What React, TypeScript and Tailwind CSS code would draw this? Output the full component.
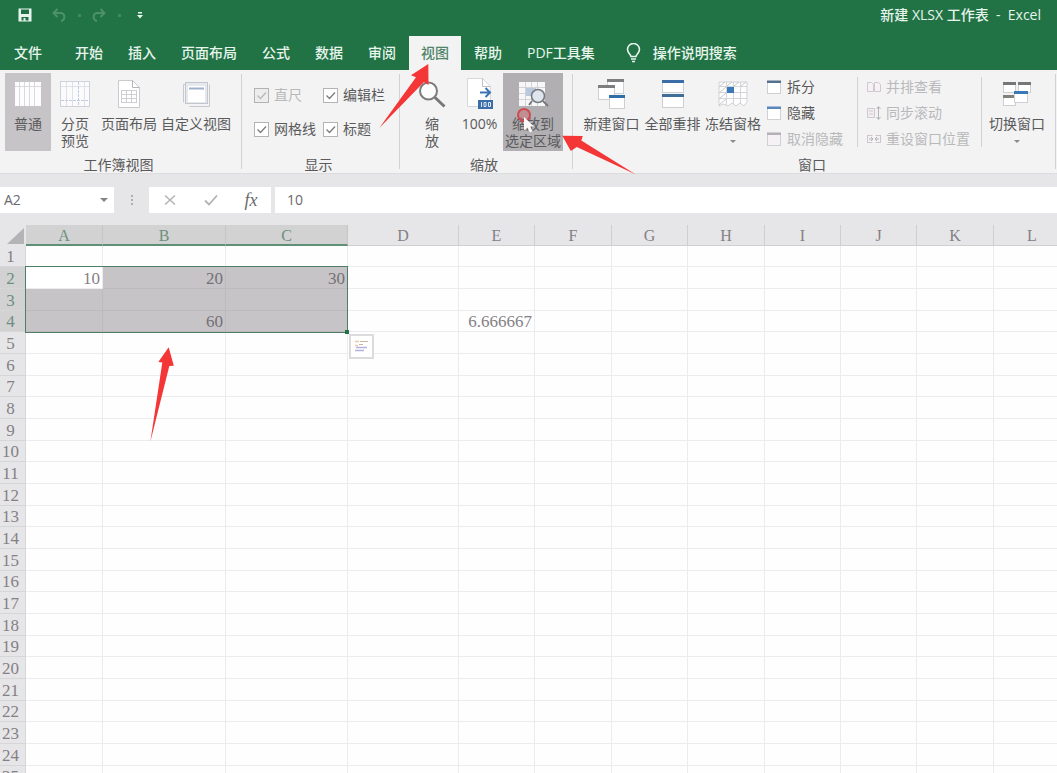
import { ReactNode, useState } from 'react';
import clsx from 'clsx';

const tabs = ['开始', '插入', '页面布局', '公式', '数据', '审阅', '视图', '帮助', 'PDF工具集'];

const columns = [
  { name: 'A', width: 'w-[77px]' },
  { name: 'B', width: 'w-[123px]' },
  { name: 'C', width: 'w-[122px]' },
  { name: 'D', width: 'w-[111px]' },
  { name: 'E', width: 'w-[76px]' },
  { name: 'F', width: 'w-[77px]' },
  { name: 'G', width: 'w-[76px]' },
  { name: 'H', width: 'w-[77px]' },
  { name: 'I', width: 'w-[76px]' },
  { name: 'J', width: 'w-[76px]' },
  { name: 'K', width: 'w-[77px]' },
  { name: 'L', width: 'w-[77px]' },
];

const rows = Array.from({ length: 25 }, (_, i) => i + 1);

const values: Record<string, string> = {
  A2: '10',
  B2: '20',
  C2: '30',
  B4: '60',
  E4: '6.666667',
};

const isSelectedCol = (c: string) => ['A', 'B', 'C'].includes(c);
const isSelectedRow = (r: number) => r >= 2 && r <= 4;

/* ---------- icons ---------- */

function SaveIcon() {
  return (
    <svg width="14" height="14" viewBox="0 0 14 14">
      <path fill="#e8f5ec" fillRule="evenodd" d="M0.5 0.5h13v13h-13zM3 1.5v4.5h8V1.5zM3.5 9v3.5h2V10h2v2.5h3V9z" />
    </svg>
  );
}

function UndoIcon() {
  return (
    <svg width="14" height="14" viewBox="0 0 14 14" fill="none" stroke="#4d9069" strokeWidth="2">
      <path d="M5.500 1L1.500 5l4 4M1.500 5h7c5 0 5 7 0.500 8" />
    </svg>
  );
}

function RedoIcon() {
  return (
    <svg width="14" height="14" viewBox="0 0 14 14" fill="none" stroke="#4d9069" strokeWidth="2">
      <path d="M8.500 1l4 4-4 4M12.500 5h-7c-5 0-5 7-0.500 8" />
    </svg>
  );
}

function BulbIcon() {
  return (
    <svg width="15" height="20" viewBox="0 0 15 20" fill="none" stroke="#e8f5ec" strokeWidth="1.600">
      <path d="M5 13.500c0-2-3.500-3.500-3.500-7a6 6 0 0 1 12 0c0 3.500-3.500 5-3.500 7zM5 16h5M6 18.500h3" />
    </svg>
  );
}

function NormalViewIcon() {
  return (
    <svg width="28" height="28" viewBox="0 0 28 28">
      <rect x="1" y="2" width="26" height="24" fill="#fdfdfd" />
      <path d="M5.500 2v24M10.500 2v24M15.500 2v24M20.500 2v24M1 6.500h26" stroke="#d9d9dd" fill="none" />
    </svg>
  );
}

function PageBreakIcon() {
  return (
    <svg width="30" height="28" viewBox="0 0 30 28">
      <rect x="0.500" y="1.500" width="29" height="25" fill="#fbfbfd" stroke="#cfd2da" />
      <path d="M6.500 2v24M12.500 2v24M24.500 2v24M1 6.500h28" stroke="#dfe1e6" fill="none" />
      <path d="M18.500 2v24M1 20.500h28" stroke="#c3cbe0" fill="none" strokeDasharray="3 1" />
    </svg>
  );
}

function PageLayoutIcon() {
  return (
    <svg width="24" height="30" viewBox="0 0 24 30">
      <path d="M1.500 1.500h14l7 7v20h-21z" fill="#fff" stroke="#cacace" />
      <path d="M15.500 1.500v7h7" fill="none" stroke="#b5b5ba" />
      <path d="M4 11.500h16M4 15.500h16M4 19.500h16M4 23.500h16M4.500 11v13M9.500 11v13M14.500 11v13M19.500 11v13" stroke="#cdcdd2" fill="none" />
    </svg>
  );
}

function CustomViewIcon() {
  return (
    <svg width="28" height="28" viewBox="0 0 28 28">
      <path d="M1.500 22.500v-18h20M7.500 26.500h20v-22" fill="none" stroke="#c7c9d1" />
      <rect x="3.500" y="2.500" width="22" height="21" fill="#e6e8ee" stroke="#c4c6cd" />
      <rect x="6" y="6" width="17" height="16" fill="#fff" />
      <path d="M7 8.500h15" stroke="#9fb1cf" strokeWidth="2" />
    </svg>
  );
}

function ZoomIcon() {
  return (
    <svg width="30" height="30" viewBox="0 0 30 30">
      <circle cx="11.500" cy="12" r="8.500" fill="#fcfcfc" stroke="#7c7c7f" strokeWidth="2" />
      <path d="M18 18.500l9.500 9" stroke="#77777a" strokeWidth="3" />
    </svg>
  );
}

function Zoom100Icon() {
  return (
    <svg width="28" height="34" viewBox="0 0 28 34">
      <path d="M1.500 1.500h15l8 8v20h-23z" fill="#fff" stroke="#d8d8dc" />
      <path d="M16.500 1.500v8h8" fill="none" stroke="#c0c0c4" />
      <path d="M14 15.500h9M19.500 11l4.500 4.500-4.500 4.500" fill="none" stroke="#3b74b5" strokeWidth="2" />
      <rect x="12" y="23" width="15" height="9" fill="#3b6ea8" />
      <path d="M15.500 25v5M18 25.500h2v4h-2zM22.500 25.500h2v4h-2z" fill="none" stroke="#dfe9f5" />
    </svg>
  );
}

function ZoomSelectionIcon() {
  return (
    <svg width="32" height="30" viewBox="0 0 32 30">
      <rect x="2" y="3" width="26" height="24" fill="#f7f7f8" />
      <path d="M8.500 3v24M14.500 3v24M20.500 3v24M2 8.500h26M2 14.500h26M2 20.500h26" stroke="#d3d3d7" fill="none" />
      <rect x="9" y="9" width="10" height="8" fill="#b8c9de" />
      <circle cx="21" cy="17" r="6.500" fill="#dfe5ed" stroke="#77797f" strokeWidth="1.600" />
      <path d="M26 22l5 5M15 22l-3 4" stroke="#77797f" strokeWidth="2" />
    </svg>
  );
}

function MiniWindow({ x, y, w, h, bar }: { x: number; y: number; w: number; h: number; bar: string }) {
  return (
    <g>
      <rect x={x + 0.5} y={y + 0.5} width={w - 1} height={h - 1} fill="#fff" stroke="#cfcfd3" />
      <rect x={x} y={y} width={w} height="3" fill={bar} />
    </g>
  );
}

function NewWindowIcon() {
  return (
    <svg width="30" height="32" viewBox="0 0 30 32">
      <MiniWindow x={10} y={1} w={17} h={15} bar="#7d7d80" />
      <MiniWindow x={1} y={7} w={17} h={15} bar="#7d7d80" />
      <MiniWindow x={12} y={17} w={16} h={14} bar="#2f6ea6" />
    </svg>
  );
}

function ArrangeIcon() {
  return (
    <svg width="24" height="30" viewBox="0 0 24 30">
      <MiniWindow x={1} y={1} w={22} h={13} bar="#3b6ea8" />
      <MiniWindow x={1} y={15} w={22} h={14} bar="#3f6f98" />
    </svg>
  );
}

function FreezeIcon() {
  return (
    <svg width="30" height="28" viewBox="0 0 30 28">
      <path d="M1 2h28v20l-3 4-4-3-4 3-4-3-4 3-5-2-4 2z" fill="#fdfdfd" stroke="#d2d2d6" />
      <path d="M8.500 2v23M15.500 2v23M22.500 2v21M1 6.500h28M1 12.500h28M1 18.500h28" stroke="#d4d4d9" fill="none" />
      <path d="M1 7l6-5M1 13l7-6M1 19l7-6M1 25l7-6M9 6l5-4M16 6l5-4M23 6l5-4" stroke="#c8c8ce" fill="none" />
      <rect x="9" y="7" width="7" height="6" fill="#3b78b8" />
    </svg>
  );
}

function SwitchIcon() {
  return (
    <svg width="30" height="28" viewBox="0 0 30 28">
      <MiniWindow x={1} y={2} w={13} h={11} bar="#77777a" />
      <MiniWindow x={16} y={2} w={13} h={11} bar="#77777a" />
      <MiniWindow x={1} y={15} w={13} h={11} bar="#85807a" />
      <MiniWindow x={12} y={11} w={14} h={12} bar="#3b78b8" />
    </svg>
  );
}

function PaneIcon({ bar, muted }: { bar: string; muted?: boolean }) {
  return (
    <svg width="14" height="14" viewBox="0 0 14 14">
      <rect x="0.500" y="1.500" width="13" height="12" fill={muted ? '#f6f1f4' : '#fff'} stroke="#cfcfd4" />
      <rect x="0" y="0.500" width="14" height="2.500" fill={bar} />
    </svg>
  );
}

function SideBySideIcon() {
  return (
    <svg width="16" height="14" viewBox="0 0 16 14" fill="#f6f1f5" stroke="#d2c8d0">
      <path d="M1.500 2.500h4l2 2v7h-6zM8.500 2.500h4l2 2v7h-6z" />
    </svg>
  );
}

function SyncScrollIcon() {
  return (
    <svg width="16" height="16" viewBox="0 0 16 16" fill="#f3eef2" stroke="#cfc8cf">
      <path d="M1.500 3.500h7v9h-7zM3 6h4M3 9h4" />
      <path d="M12.500 2v12M10.500 4l2-2.500 2 2.500M10.500 12l2 2.500 2-2.500" stroke="#b3b3b8" fill="none" />
    </svg>
  );
}

function ResetPositionIcon() {
  return (
    <svg width="16" height="14" viewBox="0 0 16 14" fill="none" stroke="#cfc3cc">
      <path d="M1.500 3.500h5M9.500 3.500h5M1.500 10.500h5M9.500 10.500h5M1.500 3v8M14.500 3v8" />
      <path d="M3 7h4M5 5l2 2-2 2M13 7H9M11 5L9 7l2 2" stroke="#b5aeb5" />
    </svg>
  );
}

/* ---------- ribbon ---------- */

function BigButton({ icon, lines, className, arrow }: { icon: ReactNode; lines: string[]; className: string; arrow?: boolean }) {
  return (
    <button className={clsx('flex h-[78px] shrink-0 flex-col items-center pt-1 leading-[17px] whitespace-nowrap', className)}>
      <span className="flex h-[38px] items-center justify-center pb-1">{icon}</span>
      {lines.map(l => <span key={l}>{l}</span>)}
      {arrow && <span className="mt-2 border-x-3 border-t-3 border-x-transparent border-t-[#8a8a8c]" />}
    </button>
  );
}

function SmallButton({ icon, label, disabled }: { icon: ReactNode; label: string; disabled?: boolean }) {
  return (
    <button disabled={disabled} className="flex h-[26px] items-center gap-1 whitespace-nowrap disabled:text-[#b9b9bc]">
      <span className="flex w-4 shrink-0">{icon}</span>
      {label}
    </button>
  );
}

function Check({ label, disabled }: { label: string; disabled?: boolean }) {
  return (
    <label className={clsx('flex items-center gap-[5px] whitespace-nowrap', disabled && 'text-[#b9b9bc]')}>
      <span className="grid size-[15px] shrink-0">
        <input
          type="checkbox"
          defaultChecked
          disabled={disabled}
          className="peer col-start-1 row-start-1 size-[15px] appearance-none border border-[#b3b3b6] bg-white disabled:bg-[#ededee]"
        />
        <svg viewBox="0 0 15 15" className="pointer-events-none invisible col-start-1 row-start-1 size-[15px] peer-checked:visible" fill="none" stroke={disabled ? '#b9b9bc' : '#7c7c80'} strokeWidth="1.300">
          <path d="M3.500 7.500l3 3 5.500-6" />
        </svg>
      </span>
      {label}
    </label>
  );
}

function Group({ label, width, pad, children }: { label: string; width: string; pad: string; children: ReactNode }) {
  return (
    <section aria-label={label} className={clsx('shrink-0 pt-[3px]', width)}>
      <div className={clsx('flex h-[78px]', pad)}>{children}</div>
      <div className="mt-1.5 pr-1 text-center leading-4">{label}</div>
    </section>
  );
}

function Separator() {
  return <div className="my-1 w-px shrink-0 bg-[#d2d2d4]" />;
}

function Ribbon() {
  return (
    <div className="flex h-[104px] shrink-0 overflow-hidden border-b border-[#dcdcde] bg-[#f3f3f3] text-sm text-[#5a5a5c]">
      <Group label="工作簿视图" width="w-[241px]" pad="pl-[5px]">
        <BigButton icon={<NormalViewIcon />} lines={['普通']} className="w-[46px] bg-[#c6c4c6]" />
        <BigButton icon={<PageBreakIcon />} lines={['分页', '预览']} className="w-12" />
        <BigButton icon={<PageLayoutIcon />} lines={['页面布局']} className="w-[60px]" />
        <BigButton icon={<CustomViewIcon />} lines={['自定义视图']} className="w-[74px]" />
      </Group>
      <Separator />
      <Group label="显示" width="w-[157px]" pad="pl-3">
        <div className="grid grid-cols-[69px_auto] grid-rows-[34px_34px] content-center">
          <Check label="直尺" disabled />
          <Check label="编辑栏" />
          <Check label="网格线" />
          <Check label="标题" />
        </div>
      </Group>
      <Separator />
      <Group label="缩放" width="w-[172px]" pad="pl-2">
        <BigButton icon={<ZoomIcon />} lines={['缩', '放']} className="w-12" />
        <BigButton icon={<Zoom100Icon />} lines={['100%']} className="w-[47px]" />
        <BigButton icon={<ZoomSelectionIcon />} lines={['缩放到', '选定区域']} className="w-[60px] bg-[#b1afb1]" />
      </Group>
      <Separator />
      <Group label="窗口" width="w-[482px]" pad="pl-2">
        <BigButton icon={<NewWindowIcon />} lines={['新建窗口']} className="w-[61px]" />
        <BigButton icon={<ArrangeIcon />} lines={['全部重排']} className="w-[61px]" />
        <BigButton icon={<FreezeIcon />} lines={['冻结窗格']} className="w-[60px]" arrow />
        <div className="ml-1 w-[90px] shrink-0 pt-px">
          <SmallButton icon={<PaneIcon bar="#54708f" />} label="拆分" />
          <SmallButton icon={<PaneIcon bar="#5b86bd" />} label="隐藏" />
          <SmallButton icon={<PaneIcon bar="#b5b0b6" muted />} label="取消隐藏" disabled />
        </div>
        <Separator />
        <div className="ml-2 w-[115px] shrink-0 pt-px">
          <SmallButton icon={<SideBySideIcon />} label="并排查看" disabled />
          <SmallButton icon={<SyncScrollIcon />} label="同步滚动" disabled />
          <SmallButton icon={<ResetPositionIcon />} label="重设窗口位置" disabled />
        </div>
        <Separator />
        <BigButton icon={<SwitchIcon />} lines={['切换窗口']} className="ml-1 w-[62px]" arrow />
      </Group>
      <Separator />
    </div>
  );
}

/* ---------- sheet ---------- */

function rowHeight(r: number) {
  return r % 3 === 1 ? 'h-[21px]' : 'h-[22px]';
}

function Sheet() {
  return (
    <div className="relative min-h-0 flex-1 overflow-hidden bg-[#fefefe] font-['Liberation_Serif','Noto_Sans_CJK_SC',serif] text-[17px] leading-[18px] text-[#858085]">
      <table className="w-[1071px] table-fixed border-separate border-spacing-0">
        <thead>
          <tr className="bg-[#e6e6e8]">
            <th className="h-[21px] w-[26px] p-0" aria-label="全选">
              <svg width="26" height="21" viewBox="0 0 26 21" className="block">
                <path d="M24 3v16H7z" fill="#b4b4b6" />
              </svg>
            </th>
            {columns.map(c => (
              <th
                key={c.name}
                scope="col"
                className={clsx(
                  'h-[21px] border-r p-0 pt-0.5 text-base leading-4 font-normal',
                  c.width,
                  isSelectedCol(c.name)
                    ? 'border-r-[#c4c6c5] border-b-2 border-b-[#5f8f76] bg-[#d2d2d3] text-[#6c8f7e]'
                    : 'border-b border-r-[#cfcfd2] border-b-[#cfcfd2]'
                )}
              >
                {c.name}
              </th>
            ))}
          </tr>
        </thead>
        <tbody>
          {rows.map(r => (
            <tr key={r}>
              <th
                scope="row"
                className={clsx(
                  'border-r border-b border-[#d6d6d8] p-0 pt-0.5 pr-1 font-normal',
                  rowHeight(r),
                  isSelectedRow(r) ? 'bg-[#d2d2d3] text-[#6c8f7e]' : 'bg-[#e6e6e8]'
                )}
              >
                {r}
              </th>
              {columns.map(c => {
                const id = `${c.name}${r}`;
                const selected = isSelectedCol(c.name) && isSelectedRow(r);
                return (
                  <td
                    key={id}
                    className={clsx(
                      'border-r border-b p-0 pt-0.5 pr-0.5 text-right',
                      selected && id !== 'A2' ? 'border-[#bcbabd] bg-[#c6c4c6] text-[#757075]' : 'border-[#ececee]',
                      id === 'A2' && 'bg-white'
                    )}
                  >
                    {values[id]}
                  </td>
                );
              })}
            </tr>
          ))}
        </tbody>
      </table>

      {/* selection frame with its fill handle */}
      <div className="pointer-events-none absolute top-[41px] left-[25px] h-[67px] w-[323px] border border-[#4f7d66]">
        <span className="absolute -right-0.5 -bottom-0.5 size-1 bg-[#217346]" />
      </div>

      <button aria-label="快速分析" className="absolute top-[109px] left-[349px] flex size-[25px] items-center justify-center border-2 border-[#dcdcde] bg-white">
        <svg width="15" height="13" viewBox="0 0 15 13" fill="none">
          <path d="M1 1.500h4M1 5.500h3" stroke="#efc9a0" strokeWidth="1.500" />
          <path d="M6 1.500h8M5 4.500h4" stroke="#c9b4a6" />
          <path d="M2 7.500h11M1 10.500h9" stroke="#b3b2dd" strokeWidth="1.500" />
        </svg>
      </button>
    </div>
  );
}

export default function App() {
  const [active, setActive] = useState('视图');

  return (
    <div className="relative flex h-screen flex-col overflow-hidden bg-[#e6e6e8] font-['Open_Sans','Noto_Sans_CJK_SC',sans-serif]">
      {/* Title bar */}
      <header className="flex h-9 shrink-0 items-center bg-[#217346] pr-4 pb-1.5 pl-[18px] text-sm font-medium text-[#e8f5ec]">
        <button aria-label="保存"><SaveIcon /></button>
        <button aria-label="撤消" className="ml-5"><UndoIcon /></button>
        <span className="ml-3 size-[3px] bg-[#3f875e]" />
        <button aria-label="恢复" className="ml-[11px]"><RedoIcon /></button>
        <span className="ml-3 size-[3px] bg-[#3f875e]" />
        <button aria-label="自定义快速访问工具栏" className="ml-4 flex flex-col items-center">
          <svg width="6" height="7" viewBox="0 0 6 7" fill="#e8f5ec"><path d="M1 0h4v1.500H1zM0 3h6L3 6.500z" /></svg>
        </button>
        <h1 className="ml-auto whitespace-pre">新建 XLSX 工作表  -  Excel</h1>
      </header>

      {/* Tabs */}
      <nav className="flex h-[34px] shrink-0 items-stretch gap-px bg-[#217346] pl-0.5 text-sm font-medium whitespace-nowrap text-[#e8f5ec]">
        <button className="mr-2 px-3">文件</button>
        {tabs.map(t => (
          <button
            key={t}
            onClick={() => setActive(t)}
            className={clsx('px-3', active === t && 'bg-[#f3f3f3] text-[#4f8468]')}
          >
            {t}
          </button>
        ))}
        <button className="ml-4 flex items-center gap-3 px-0.5"><BulbIcon />操作说明搜索</button>
      </nav>

      <Ribbon />

      {/* Formula bar */}
      <div className="flex h-[51px] shrink-0 items-stretch pt-[13px] pb-3 text-sm text-[#6a6a6d]">
        <div className="flex w-[114px] shrink-0 items-center bg-white pr-1.5 pl-1">
          <input aria-label="名称框" defaultValue="A2" className="w-full min-w-0 outline-none" />
          <span className="shrink-0 border-x-4 border-t-4 border-x-transparent border-t-[#858588]" />
        </div>
        <div className="flex w-[35px] shrink-0 flex-col items-center justify-center gap-0.5">
          <span className="size-0.5 bg-[#adadb0]" />
          <span className="size-0.5 bg-[#adadb0]" />
          <span className="size-0.5 bg-[#adadb0]" />
        </div>
        <div className="mr-1 flex w-[122px] shrink-0 items-center justify-around bg-white">
          <button aria-label="取消">
            <svg width="14" height="14" viewBox="0 0 14 14" stroke="#b3b3b6" strokeWidth="1.500"><path d="M2 2.500l10 9M12 2.500l-10 9" /></svg>
          </button>
          <button aria-label="输入">
            <svg width="14" height="14" viewBox="0 0 14 14" fill="none" stroke="#b3b3b6" strokeWidth="1.800"><path d="M1 7.500l4 4 8-9" /></svg>
          </button>
          <button className="font-['Liberation_Serif',serif] text-lg leading-5 italic">fx</button>
        </div>
        <input aria-label="编辑栏" defaultValue="10" className="min-w-0 flex-1 bg-white px-3 outline-none" />
      </div>

      <Sheet />

      {/* click marker and mouse pointer */}
      <svg width="22" height="28" viewBox="0 0 22 28" className="pointer-events-none absolute top-[106px] left-[515px]">
        <circle cx="9" cy="9" r="6" fill="#d9545a" fillOpacity="0.35" stroke="#cf4a50" strokeWidth="2" />
        <path d="M9 11v13.500l3.500-3 2.500 5 2.500-1.500-2.500-4.500h4z" fill="#fafafa" />
      </svg>

      {/* callout arrows */}
      <svg width="640" height="450" viewBox="0 0 640 450" fill="#f43636" className="pointer-events-none absolute top-0 left-0">
        <path d="M428.300 64L411 75.300l5 2L379.300 128l44.700-46 4.500 3z" />
        <path d="M562.300 135.700l20.500.3-1.500 4.500 54.500 34-59-27.500-6 4z" />
        <path d="M168.700 347.300L158.300 362l4 .5-12 79.500 19-76 4.500-.3z" />
      </svg>
    </div>
  );
}
